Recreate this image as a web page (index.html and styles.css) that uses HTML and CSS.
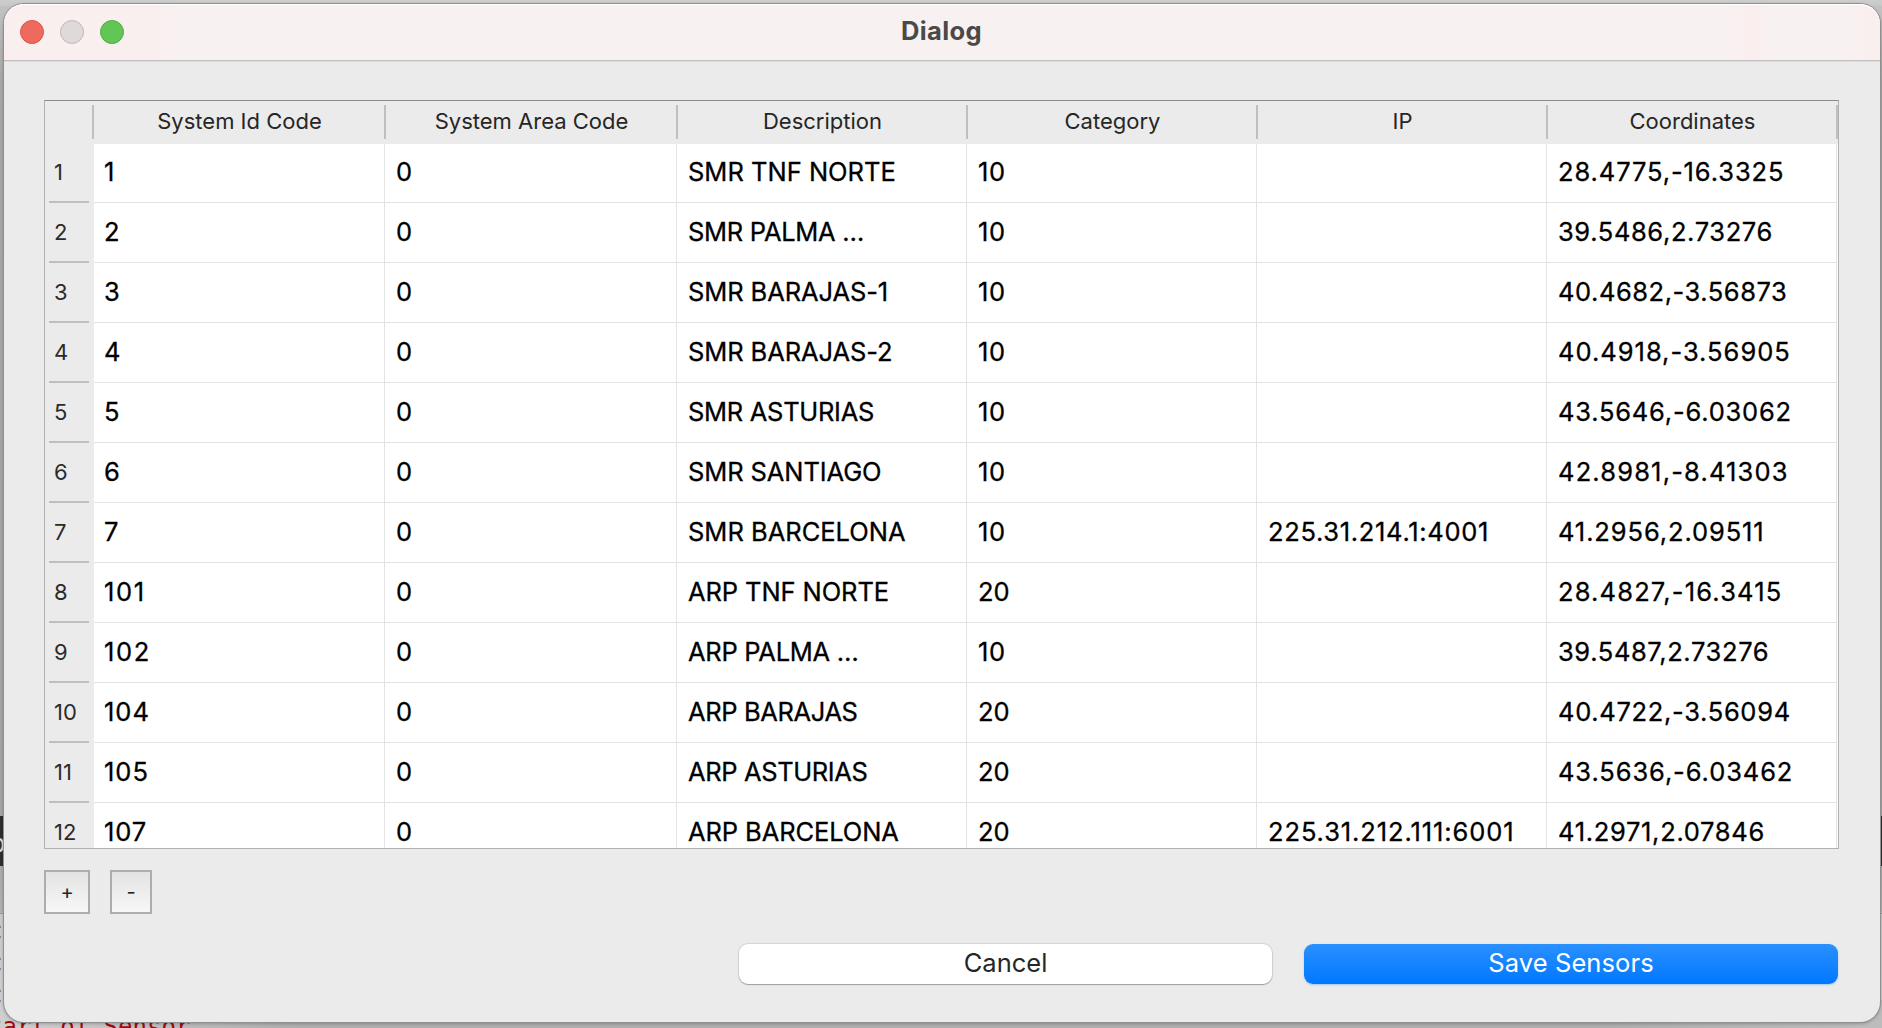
FILE: index.html
```html
<!DOCTYPE html>
<html lang="en">
<head>
<meta charset="utf-8">
<title>Dialog</title>
<link rel="stylesheet" href="styles.css">
</head>
<body>
<div class="backdrop">
  <div class="backdrop-band"><span>p</span></div>
  <div class="backdrop-rule"></div>
  <pre class="backdrop-log">cc
cc
cc
tart of Sensor</pre>
</div>
<main class="window">
  <header class="titlebar">
    <div class="lights"><i class="light close"></i><i class="light minimize"></i><i class="light zoom"></i></div>
    <h1 class="title">Dialog</h1>
  </header>
  <section class="content">
    <div class="table">
      <div class="head">
        <div class="th"></div><div class="th">System Id Code</div><div class="th">System Area Code</div><div class="th">Description</div><div class="th">Category</div><div class="th">IP</div><div class="th">Coordinates</div>
      </div>
      <div class="row"><div class="num">1</div><div class="td">1</div><div class="td">0</div><div class="td">SMR TNF NORTE</div><div class="td w6">10</div><div class="td"></div><div class="td w9">28.4775,-16.3325</div></div>
      <div class="row"><div class="num">2</div><div class="td">2</div><div class="td">0</div><div class="td t3">SMR PALMA …</div><div class="td w6">10</div><div class="td"></div><div class="td w6">39.5486,2.73276</div></div>
      <div class="row"><div class="num">3</div><div class="td">3</div><div class="td">0</div><div class="td t1">SMR BARAJAS-1</div><div class="td w6">10</div><div class="td"></div><div class="td w5">40.4682,-3.56873</div></div>
      <div class="row"><div class="num">4</div><div class="td">4</div><div class="td">0</div><div class="td t1">SMR BARAJAS-2</div><div class="td w6">10</div><div class="td"></div><div class="td w10">40.4918,-3.56905</div></div>
      <div class="row"><div class="num">5</div><div class="td">5</div><div class="td">0</div><div class="td t3">SMR ASTURIAS</div><div class="td w6">10</div><div class="td"></div><div class="td w8">43.5646,-6.03062</div></div>
      <div class="row"><div class="num">6</div><div class="td">6</div><div class="td">0</div><div class="td t1">SMR SANTIAGO</div><div class="td w6">10</div><div class="td"></div><div class="td w12">42.8981,-8.41303</div></div>
      <div class="row"><div class="num">7</div><div class="td">7</div><div class="td">0</div><div class="td">SMR BARCELONA</div><div class="td w6">10</div><div class="td w7">225.31.214.1:4001</div><div class="td w9">41.2956,2.09511</div></div>
      <div class="row"><div class="num">8</div><div class="td w16">101</div><div class="td">0</div><div class="td t1">ARP TNF NORTE</div><div class="td">20</div><div class="td"></div><div class="td w12">28.4827,-16.3415</div></div>
      <div class="row"><div class="num">9</div><div class="td w16">102</div><div class="td">0</div><div class="td t3">ARP PALMA …</div><div class="td w6">10</div><div class="td"></div><div class="td w6">39.5487,2.73276</div></div>
      <div class="row"><div class="num">10</div><div class="td w10">104</div><div class="td">0</div><div class="td t4">ARP BARAJAS</div><div class="td">20</div><div class="td"></div><div class="td w7">40.4722,-3.56094</div></div>
      <div class="row"><div class="num">11</div><div class="td w10">105</div><div class="td">0</div><div class="td t4">ARP ASTURIAS</div><div class="td">20</div><div class="td"></div><div class="td w9">43.5636,-6.03462</div></div>
      <div class="row"><div class="num">12</div><div class="td w9">107</div><div class="td">0</div><div class="td t1">ARP BARCELONA</div><div class="td">20</div><div class="td w9">225.31.212.111:6001</div><div class="td w7">41.2971,2.07846</div></div>
    </div>
    <div class="tools"><button class="tool add">+</button><button class="tool remove">-</button></div>
    <div class="actions"><button class="action">Cancel</button><button class="action primary">Save Sensors</button></div>
  </section>
</main>
</body>
</html>
```
FILE: styles.css
```css
* { box-sizing: border-box; }

body {
  margin: 0;
  height: 1028px;
  overflow: hidden;
  font-family: Inter, "Liberation Sans", sans-serif;
  background: #b4b4b4;
}

/* What shows of the desktop round the dialog */
.backdrop {
  position: absolute;
  inset: 0;
  overflow: hidden;
  background:
    linear-gradient(90deg, #cfcfcf, #adadad 300px, #adadad 1600px, #bcbcbc) 0 1000px / 100% 28px no-repeat,
    linear-gradient(#cdcdcd, #c8c8c8) 0 0 / 100% 6px no-repeat,
    linear-gradient(#c4c4c4, #a8a8a8 80px, #a4a4a4 800px, #b0b0b0 912px, #cacaca 914px, #d0d0d0);
}
.backdrop-band {
  margin-top: 816px;
  height: 50px;
  background: #2e2e2e;
  color: #d8d8d8;
  font: 24px/56px "DejaVu Sans Mono", monospace;
}
.backdrop-band span { margin-left: -9px; }
.backdrop-rule { margin-top: 47px; height: 1px; background: #999; }
.backdrop-log {
  margin: 1px 0 0 -12px;
  color: #9e0a0f;
  font: 24px/32px "DejaVu Sans Mono", monospace;
}

.window {
  position: relative;
  display: flex;
  flex-direction: column;
  width: 1876px;
  height: 1018px;
  margin: 4px 0 0 4px;
  border-radius: 20px;
  background: #ebebeb;
  box-shadow: 0 0 0 1px #909090, 0 1px 3px 1px rgba(0, 0, 0, .2);
}

.titlebar {
  display: grid;
  grid-template-columns: 1fr auto 1fr;
  align-items: center;
  height: 58px;
  padding: 0 16px;
  border-bottom: 1px solid #dddbdb;
  border-radius: 20px 20px 0 0;
  background: linear-gradient(90deg, #faefef, #faefef 150px, #f8f1f1 170px, #f8f1f1 1725px, #faeeee 1750px, #f8f1f1 1765px, #f8f1f1 1840px, #faeeee);
  box-shadow: inset 0 1px #fff, inset 0 -1px #c3bfc0;
}
.lights { display: flex; gap: 16px; margin-bottom: 1px; }
.light { width: 24px; height: 24px; border: 1px solid; border-radius: 50%; }
.close { background: #ee6a5f; border-color: #d9544a; }
.minimize { background: #dfd9d9; border-color: #bfb9b9; }
.zoom { background: #62c655; border-color: #4fae41; }
.title {
  margin: 0 1px 3px 0;
  color: #4b4848;
  font-size: 25.5px;
  font-weight: 700;
  line-height: 30px;
  letter-spacing: .4px;
}

.content {
  display: flex;
  flex-direction: column;
  padding: 38px 41px 0 40px;
}

.table {
  height: 749px;
  overflow: hidden;
  border: 1px solid #b1b1b1;
  border-top-color: #8c8c8c;
  background: #fff;
}
.head {
  display: grid;
  grid-template-columns: 49px 292px 292px 290px 290px 290px 290px;
  height: 43px;
  padding: 4px 0 5px;
  background: #ebebeb;
}
.th {
  padding-left: 1px;
  border-right: 2px solid #bfbfbf;
  color: #262626;
  font-size: 22px;
  line-height: 32px;
  text-align: center;
}
.row {
  display: grid;
  grid-template-columns: 49px 291px 292px 290px 290px 290px 290px;
  height: 60px;
}
.head + .row { height: 59px; }
.num, .td { display: flex; align-items: flex-end; line-height: 40px; white-space: nowrap; }
.num {
  padding: 0 0 11px 9px;
  background:
    linear-gradient(#bfbfbf, #bfbfbf) 4px 100% / 40px 2px no-repeat,
    #ebebeb;
  color: #2b2b2b;
  font-size: 22px;
}
.td {
  padding: 0 0 10px 11px;
  border-right: 1px solid #e3e3e3;
  border-bottom: 1px solid #e3e3e3;
  color: #000;
  font-size: 25.5px;
  -webkit-text-stroke: .3px #000;
}
.num + .td { padding-left: 10px; }

/* Tracking steps, in tenths of a pixel: w = wider, t = tighter */
.w5 { letter-spacing: .54px; }
.w6 { letter-spacing: .62px; }
.w7 { letter-spacing: .68px; }
.w8 { letter-spacing: .78px; }
.w9 { letter-spacing: .89px; }
.w10 { letter-spacing: 1px; }
.w12 { letter-spacing: 1.16px; }
.w16 { letter-spacing: 1.6px; }
.t1 { letter-spacing: -.1px; }
.t3 { letter-spacing: -.3px; }
.t4 { letter-spacing: -.38px; }

.tools { display: flex; gap: 20px; margin-top: 21px; }
.tool {
  height: 44px;
  padding: 0 0 1px;
  border: 2px solid #adadad;
  background: linear-gradient(#e3e3e3, #f7f7f7);
  color: #262626;
  font: 20px/38px Inter, "Liberation Sans", sans-serif;
}
.add { width: 46px; }
.remove { width: 42px; }

.actions { display: flex; justify-content: flex-end; gap: 32px; margin: 30px 1px 0 0; }
.action {
  width: 533px;
  height: 40px;
  padding: 0 0 2px;
  border: 0;
  border-radius: 9px;
  background: #fff;
  box-shadow: 0 0 1px 1px rgba(0, 0, 0, .1), 0 1px 1px rgba(0, 0, 0, .25);
  color: #262626;
  font: 25.5px/38px Inter, "Liberation Sans", sans-serif;
}
.primary {
  width: 534px;
  background: linear-gradient(#2a90ff, #0078ff);
  box-shadow: 0 1px 2px rgba(0, 110, 240, .3);
  color: #fff;
  letter-spacing: .1px;
}
```
